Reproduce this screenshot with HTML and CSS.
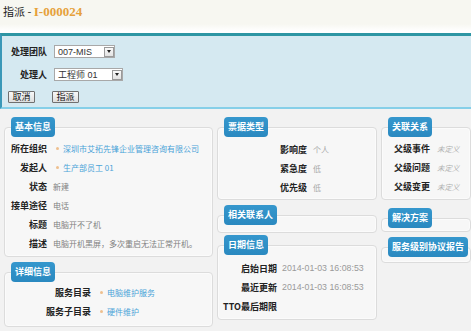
FILE: index.html
```html
<!DOCTYPE html>
<html lang="zh-CN">
<head>
    <meta charset="UTF-8">
    <title>指派 - I-000024</title>
    <link rel="stylesheet" href="styles.css">
</head>
<body>
    <div class="page-head">
        <h1 class="page-title">指派 - <span class="ticket-ref">I-000024</span></h1>
    </div>

    <div class="assign-panel">
        <div class="form-row">
            <label class="form-label">处理团队</label>
            <div class="select select-team">
                <span>007-MIS</span>
                <span class="select-arrow"><i></i></span>
            </div>
        </div>
        <div class="form-row">
            <label class="form-label">处理人</label>
            <div class="select select-agent">
                <span>工程师 01</span>
                <span class="select-arrow"><i></i></span>
            </div>
        </div>
        <div class="form-actions">
            <button class="btn">取消</button>
            <button class="btn">指派</button>
        </div>
    </div>

    <div class="details">
        <!-- left column -->
        <div class="column">
            <div class="section">
                <div class="badge">基本信息</div>
                <div class="box box-basic">
                    <div class="field"><span class="field-label w42">所在组织</span><span class="field-value"><span class="bullet"></span><a class="link">深圳市艾拓先锋企业管理咨询有限公司</a></span></div>
                    <div class="field"><span class="field-label w42">发起人</span><span class="field-value"><span class="bullet"></span><a class="link">生产部员工 01</a></span></div>
                    <div class="field"><span class="field-label w42">状态</span><span class="field-value">新建</span></div>
                    <div class="field"><span class="field-label w42">接单途径</span><span class="field-value">电话</span></div>
                    <div class="field"><span class="field-label w42">标题</span><span class="field-value">电脑开不了机</span></div>
                    <div class="field"><span class="field-label w42">描述</span><span class="field-value">电脑开机黑屏，多次重启无法正常开机。</span></div>
                </div>
            </div>
            <div class="section">
                <div class="badge">详细信息</div>
                <div class="box box-detail">
                    <div class="field"><span class="field-label w86">服务目录</span><span class="field-value"><span class="bullet"></span><a class="link">电脑维护服务</a></span></div>
                    <div class="field"><span class="field-label w86">服务子目录</span><span class="field-value"><span class="bullet"></span><a class="link">硬件维护</a></span></div>
                </div>
            </div>
        </div>

        <!-- middle column -->
        <div class="column">
            <div class="section">
                <div class="badge">票据类型</div>
                <div class="box box-type">
                    <div class="field"><span class="field-label w89">影响度</span><span class="field-value muted">个人</span></div>
                    <div class="field"><span class="field-label w89">紧急度</span><span class="field-value muted">低</span></div>
                    <div class="field"><span class="field-label w89">优先级</span><span class="field-value muted">低</span></div>
                </div>
            </div>
            <div class="section">
                <div class="badge">相关联系人</div>
                <div class="box box-empty"></div>
            </div>
            <div class="section section-near">
                <div class="badge">日期信息</div>
                <div class="box box-dates">
                    <div class="field"><span class="field-label w59">启始日期</span><span class="field-value date">2014-01-03 16:08:53</span></div>
                    <div class="field"><span class="field-label w59">最近更新</span><span class="field-value date">2014-01-03 16:08:53</span></div>
                    <div class="field"><span class="field-label w59">TTO最后期限</span><span class="field-value date"></span></div>
                </div>
            </div>
        </div>

        <!-- right column -->
        <div class="column">
            <div class="section">
                <div class="badge">关联关系</div>
                <div class="box box-links">
                    <div class="field"><span class="field-label left">父级事件</span><span class="field-value undefined">未定义</span></div>
                    <div class="field"><span class="field-label left">父级问题</span><span class="field-value undefined">未定义</span></div>
                    <div class="field"><span class="field-label left">父级变更</span><span class="field-value undefined">未定义</span></div>
                </div>
            </div>
            <div class="section section-far">
                <div class="badge">解决方案</div>
                <div class="box box-solution"></div>
            </div>
            <div class="section">
                <div class="badge">服务级别协议报告</div>
                <div class="box box-sla"></div>
            </div>
        </div>
    </div>
</body>
</html>
```

FILE: styles.css
```css
* {
    margin: 0;
    padding: 0;
    box-sizing: border-box;
}

body {
    font-family: "Noto Sans CJK SC", "Liberation Sans", sans-serif;
    font-size: 9px;
    color: #222;
    background: #f2f2f2;
    height: 331px;
    overflow: hidden;
}

/* header */
.page-head {
    height: 33px;
    background: linear-gradient(#f7f7f1 0, #f7f7f1 24px, #ffffff 31px);
}

.page-title {
    font-size: 11px;
    font-weight: normal;
    line-height: 22px;
    padding-left: 3px;
    color: #222;
}

.ticket-ref {
    font-family: "Liberation Serif", serif;
    font-size: 13px;
    font-weight: bold;
    color: #e6a13a;
}

/* assign form */
.assign-panel {
    height: 76px;
    background: #d5e9f1;
    border-top: 3px solid #2e96a4;
    border-left: 2px solid #3a98b8;
    border-bottom: 2px solid #86cfe8;
    padding: 9px 0 0 0;
}

.form-row {
    display: flex;
    align-items: center;
    height: 13px;
    margin-bottom: 10px;
}

.form-label {
    width: 45px;
    text-align: right;
    font-weight: bold;
    margin-right: 7px;
}

.select {
    display: flex;
    align-items: center;
    justify-content: space-between;
    height: 13px;
    background: #fff;
    border: 1px solid #a8a8a8;
    padding-left: 3px;
    font-family: "Liberation Sans", "Noto Sans CJK SC", sans-serif;
    color: #333;
}

.select-team { width: 61px; }
.select-agent { width: 69px; }

.select-arrow {
    width: 10px;
    height: 10px;
    border: 1px solid #9a9a9a;
    background: linear-gradient(#fafafa, #e2e2e2);
    display: flex;
    align-items: center;
    justify-content: center;
}

.select-arrow i {
    display: block;
    border-left: 2.5px solid transparent;
    border-right: 2.5px solid transparent;
    border-top: 3px solid #222;
}

.form-actions {
    display: flex;
    gap: 17px;
    padding-left: 6px;
    margin-top: 1px;
}

.btn {
    width: 27px;
    height: 12px;
    font-family: "Noto Sans CJK SC", sans-serif;
    font-size: 9px;
    line-height: 10px;
    color: #111;
    background: linear-gradient(#f8f8f8, #dedede);
    border: 1px solid #707070;
    border-radius: 1px;
}

/* details */
.details {
    display: grid;
    grid-template-columns: 209px 160px 1fr;
    column-gap: 4px;
    padding: 8px 0 0 4px;
}

.column {
    display: flex;
    flex-direction: column;
}

.section {
    display: flex;
    flex-direction: column;
    align-items: flex-start;
    margin-top: 5px;
}

.section:first-child { margin-top: 0; }
.section-near { margin-top: 2px; }
.section-far { margin-top: 8px; }

.badge {
    z-index: 1;
    height: 20px;
    line-height: 20px;
    margin: 0 0 -10px 7px;
    padding: 0 4px;
    background: linear-gradient(#3597cd, #2a89c0);
    color: #fff;
    font-weight: bold;
    border-radius: 4px;
    white-space: nowrap;
}

.box {
    align-self: stretch;
    background: #f7f7f7;
    border: 1px solid #dcdcdc;
    border-radius: 4px;
    box-shadow: inset 0 0 0 1px #fbfbfb;
}

.box-basic { padding: 11px 0 3px; }
.box-detail { padding: 10px 0 5px; }
.box-type { padding: 12px 0 2px; }
.box-empty { height: 18px; }
.box-dates { padding: 13px 0 3px; }
.box-links { padding: 11px 0 3px 12px; }
.box-solution { height: 14px; }
.box-sla { height: 16px; }

.field {
    display: flex;
    height: 19px;
    line-height: 19px;
    white-space: nowrap;
}

.field-label {
    font-weight: bold;
    text-align: right;
    flex-shrink: 0;
}

.w42 { width: 42px; }
.w59 { width: 59px; }
.w86 { width: 86px; }
.w89 { width: 89px; }

.field-label.left {
    width: 36px;
    text-align: left;
}

.field-value {
    margin-left: 6px;
    font-size: 8px;
    color: #808080;
    display: flex;
    align-items: center;
}

.bullet {
    width: 3px;
    height: 3px;
    margin: 0 4px 0 3px;
    border-radius: 50%;
    background: #eebf8e;
}

.link {
    color: #4aa3d8;
}

.muted {
    color: #a8a8a8;
}

.date {
    font-family: "Liberation Sans", sans-serif;
    font-size: 8.8px;
    color: #9a9a9a;
    margin-left: 5px;
}

.undefined {
    margin-left: 7px;
    font-size: 7.5px;
    font-style: italic;
    color: #b0b0b0;
}
```
